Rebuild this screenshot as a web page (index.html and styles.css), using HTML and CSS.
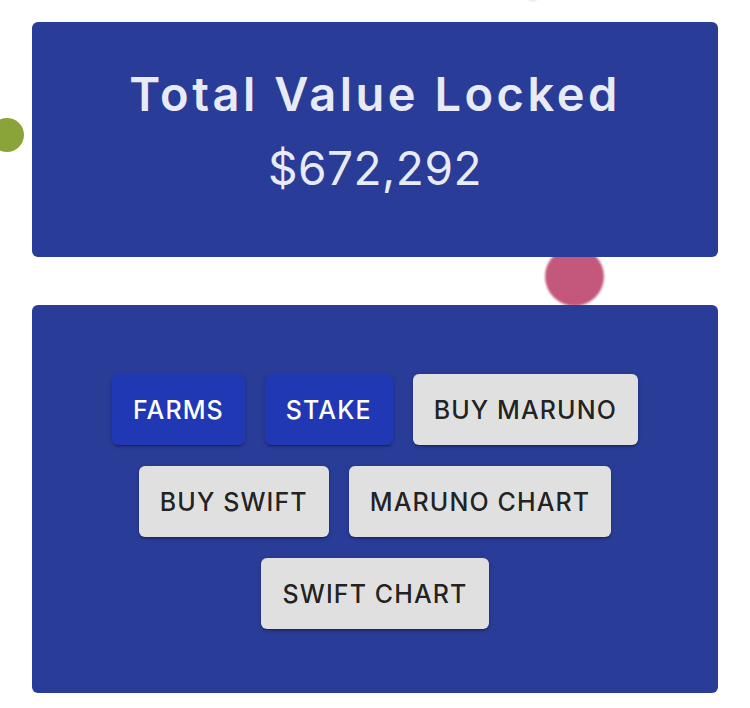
FILE: index.html
```html
<!DOCTYPE html>
<html lang="en">
<head>
<meta charset="utf-8">
<title>Total Value Locked</title>
<link rel="stylesheet" href="styles.css">
</head>
<body>
<div class="page">
  <span class="dot dot-green"></span>
  <span class="dot dot-pink"></span>
  <span class="dot dot-grey"></span>
  <section class="card tvl">
    <h1 class="tvl-title">Total Value Locked</h1>
    <p class="tvl-value">$672,292</p>
  </section>
  <section class="card links">
    <div class="btn-wrap">
      <button class="btn btn-primary">FARMS</button>
      <button class="btn btn-primary">STAKE</button>
      <button class="btn btn-default">BUY MARUNO</button>
      <button class="btn btn-default">BUY SWIFT</button>
      <button class="btn btn-default">MARUNO CHART</button>
      <button class="btn btn-default">SWIFT CHART</button>
    </div>
  </section>
</div>
</body>
</html>
```
FILE: styles.css
```css
html, body {
  margin: 0;
  padding: 0;
  background: #ffffff;
}
body {
  font-family: Inter, "Liberation Sans", sans-serif;
  overflow: hidden;
}
.page {
  position: relative;
  width: 750px;
  height: 708px;
  padding: 22px 32px 0;
  box-sizing: border-box;
  display: flex;
  flex-direction: column;
  gap: 48px;
}
.dot {
  position: absolute;
  border-radius: 50%;
  z-index: 0;
}
.dot-green {
  left: -10px;
  top: 118px;
  width: 34px;
  height: 34px;
  background: #8aa43a;
  filter: blur(0.6px);
}
.dot-pink {
  left: 545px;
  top: 247px;
  width: 59px;
  height: 59px;
  background: #c4587c;
  filter: blur(0.8px);
}
.dot-grey {
  left: 526px;
  top: -12px;
  width: 14px;
  height: 14px;
  background: #f0f0f0;
}
.card {
  position: relative;
  z-index: 1;
  background: #293c97;
  border-radius: 6px;
  box-sizing: border-box;
}
.tvl {
  height: 235px;
  padding-top: 39px;
  text-align: center;
  color: #e8eaf6;
}
.tvl-title {
  margin: 0;
  font-size: 47px;
  font-weight: 600;
  line-height: 66px;
  letter-spacing: 3.5px;
}
.tvl-value {
  margin: 8px 0 0;
  font-size: 46px;
  font-weight: 400;
  line-height: 66px;
  letter-spacing: 0.5px;
}
.links {
  height: 388px;
  padding: 69px 40px 0;
}
.btn-wrap {
  display: flex;
  flex-wrap: wrap;
  justify-content: center;
  gap: 21px 20px;
}
.btn {
  font-family: inherit;
  font-size: 25px;
  font-weight: 500;
  letter-spacing: 1.1px;
  height: 71px;
  padding: 0 21px;
  border: none;
  border-radius: 6px;
  box-shadow: 0 3px 1px -2px rgba(0,0,0,0.2), 0 2px 2px 0 rgba(0,0,0,0.14), 0 1px 5px 0 rgba(0,0,0,0.12);
  cursor: pointer;
}
.btn-primary {
  background: #2038b4;
  color: #ffffff;
}
.btn-default {
  background: #e0e0e0;
  color: rgba(0,0,0,0.87);
}
```
